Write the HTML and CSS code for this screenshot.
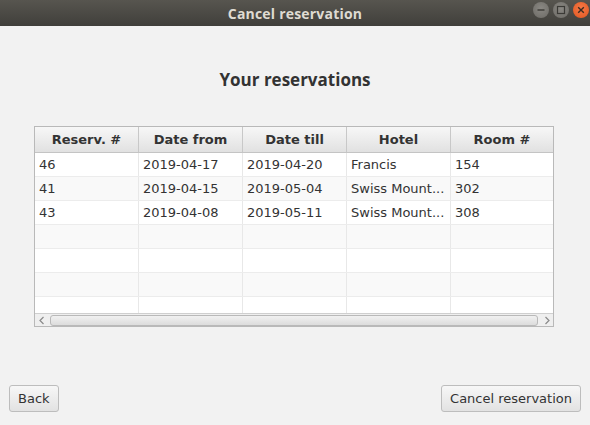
FILE: index.html
```html
<!DOCTYPE html>
<html>
<head>
<meta charset="utf-8">
<link rel="stylesheet" href="styles.css">
</head>
<body>
<div class="window">
  <div class="titlebar">
    <span class="title">Cancel reservation</span>
    <div class="controls">
      <span class="ctl ctl-min"><svg width="16" height="16" viewBox="0 0 16 16"><line x1="4.5" y1="8" x2="11.5" y2="8" stroke="#3b3a36" stroke-width="1.4"/></svg></span>
      <span class="ctl ctl-max"><svg width="16" height="16" viewBox="0 0 16 16"><rect x="4.5" y="4.5" width="7" height="7" fill="none" stroke="#3b3a36" stroke-width="1.2"/></svg></span>
      <span class="ctl ctl-close"><svg width="16" height="16" viewBox="0 0 16 16"><path d="M5.2 5.2 L10.8 10.8 M10.8 5.2 L5.2 10.8" stroke="#3a2a20" stroke-width="1.4"/></svg></span>
    </div>
  </div>
  <div class="content">
    <h1 class="heading">Your reservations</h1>
    <div class="table">
      <div class="thead">
        <div class="th">Reserv. #</div>
        <div class="th">Date from</div>
        <div class="th">Date till</div>
        <div class="th">Hotel</div>
        <div class="th">Room #</div>
      </div>
      <div class="tbody">
        <div class="tr"><div class="td">46</div><div class="td">2019-04-17</div><div class="td">2019-04-20</div><div class="td">Francis</div><div class="td">154</div></div>
        <div class="tr odd"><div class="td">41</div><div class="td">2019-04-15</div><div class="td">2019-05-04</div><div class="td">Swiss Mount...</div><div class="td">302</div></div>
        <div class="tr"><div class="td">43</div><div class="td">2019-04-08</div><div class="td">2019-05-11</div><div class="td">Swiss Mount...</div><div class="td">308</div></div>
        <div class="tr odd"><div class="td"></div><div class="td"></div><div class="td"></div><div class="td"></div><div class="td"></div></div>
        <div class="tr"><div class="td"></div><div class="td"></div><div class="td"></div><div class="td"></div><div class="td"></div></div>
        <div class="tr odd"><div class="td"></div><div class="td"></div><div class="td"></div><div class="td"></div><div class="td"></div></div>
        <div class="tr"><div class="td"></div><div class="td"></div><div class="td"></div><div class="td"></div><div class="td"></div></div>
      </div>
      <div class="hscroll">
        <span class="arrow"><svg width="12" height="11" viewBox="0 0 12 11"><path d="M7.5 2 L4 5.5 L7.5 9" fill="none" stroke="#8a8a8a" stroke-width="1.2"/></svg></span>
        <span class="thumb"></span>
        <span class="arrow"><svg width="12" height="11" viewBox="0 0 12 11"><path d="M4.5 2 L8 5.5 L4.5 9" fill="none" stroke="#8a8a8a" stroke-width="1.2"/></svg></span>
      </div>
    </div>
  </div>
  <div class="footer">
    <button class="btn">Back</button>
    <button class="btn">Cancel reservation</button>
  </div>
</div>
</body>
</html>
```
FILE: styles.css
```css
html, body {
  margin: 0;
  padding: 0;
}
body {
  width: 590px;
  height: 425px;
  overflow: hidden;
  background: #f2f2f2;
  font-family: "DejaVu Sans", "Liberation Sans", sans-serif;
}
.window {
  display: flex;
  flex-direction: column;
  height: 425px;
}
.titlebar {
  height: 26px;
  flex: none;
  background: linear-gradient(#57554f, #403f3b);
  display: flex;
  align-items: center;
  justify-content: center;
  position: relative;
}
.title {
  color: #dfdbd2;
  font-weight: bold;
  font-size: 14px;
  font-family: "Open Sans", "DejaVu Sans", sans-serif;
  letter-spacing: 0.2px;
}
.controls {
  position: absolute;
  right: 1px;
  top: 2px;
  display: flex;
  gap: 4px;
}
.ctl {
  width: 16px;
  height: 16px;
  border-radius: 50%;
  display: block;
}
.ctl svg { display: block; }
.ctl-min, .ctl-max {
  background: radial-gradient(circle at 50% 40%, #8a8883, #6c6a65);
}
.ctl-close {
  background: radial-gradient(circle at 50% 40%, #f57a48, #e0551f);
}
.content {
  flex: 1;
  display: flex;
  flex-direction: column;
  align-items: center;
}
.heading {
  margin: 43px 0 0 0;
  font-size: 17px;
  line-height: 22px;
  font-weight: bold;
  color: #333333;
  font-family: "Open Sans", "DejaVu Sans", sans-serif;
}
.table {
  margin-top: 35px;
  margin-left: 34px;
  align-self: flex-start;
  width: 518px;
  border: 1px solid #b9b9b9;
  background: #ffffff;
  display: flex;
  flex-direction: column;
}
.thead, .tr {
  display: grid;
  grid-template-columns: 104px 104px 104px 104px 1fr;
}
.thead {
  height: 25px;
  border-bottom: 1px solid #c4c4c4;
  background: linear-gradient(#f7f7f7, #e1e1e1);
}
.th {
  border-right: 1px solid #c8c8c8;
  font-size: 13px;
  font-weight: bold;
  color: #333333;
  display: flex;
  align-items: center;
  justify-content: center;
}
.th:last-child { border-right: none; }
.tbody {
  height: 160px;
  overflow: hidden;
}
.tr {
  height: 23px;
  border-bottom: 1px solid #ececec;
  background: #ffffff;
}
.tr.odd { background: #f9f9f9; }
.td {
  border-right: 1px solid #e8e8e8;
  font-size: 13px;
  color: #333333;
  padding-left: 4px;
  display: flex;
  align-items: center;
  white-space: nowrap;
  overflow: hidden;
}
.td:last-child { border-right: none; }
.hscroll {
  height: 12px;
  border-top: 1px solid #cfcfcf;
  background: #efefef;
  display: flex;
  align-items: center;
}
.arrow {
  width: 13px;
  display: flex;
  justify-content: center;
}
.arrow svg { display: block; }
.thumb {
  flex: 1;
  height: 9px;
  margin: 0 2px;
  border: 1px solid #b9b9b9;
  border-radius: 3px;
  background: linear-gradient(#f1f1f1, #dcdcdc);
}
.footer {
  display: flex;
  justify-content: space-between;
  padding: 0 9px 13px 9px;
}
.btn {
  height: 27px;
  padding: 0 8px;
  border: 1px solid #bdbdbd;
  border-radius: 3px;
  background: linear-gradient(#f7f7f7, #e2e2e2);
  font-family: "DejaVu Sans", "Liberation Sans", sans-serif;
  font-size: 13px;
  color: #333333;
}
```
